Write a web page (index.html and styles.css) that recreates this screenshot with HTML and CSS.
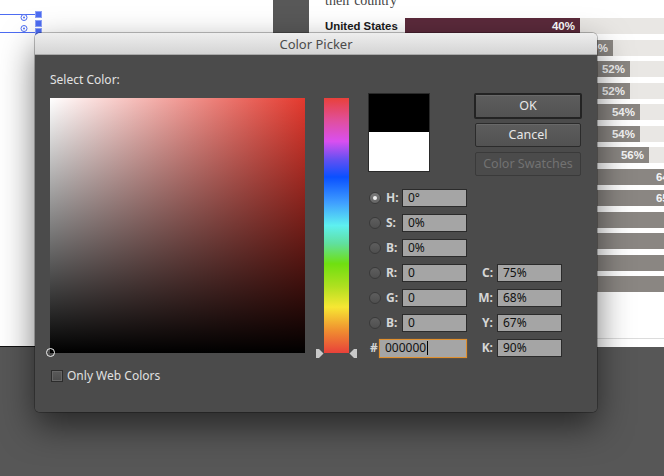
FILE: index.html
```html
<!DOCTYPE html>
<html>
<head>
<meta charset="utf-8">
<title>Color Picker</title>
<link rel="stylesheet" href="styles.css">
</head>
<body>
<div class="desk">
  <div class="pages">
    <div class="page-left">
      <svg class="handles" width="46" height="40" viewBox="0 0 46 40">
        <line x1="0" y1="14.5" x2="36" y2="14.5" stroke="#4d6cf2" stroke-width="1"/>
        <line x1="0" y1="32.5" x2="36" y2="32.5" stroke="#4d6cf2" stroke-width="1"/>
        <circle cx="24" cy="17.5" r="3" fill="#fff" stroke="#4d6cf2" stroke-width="1"/>
        <circle cx="24" cy="17.5" r="1" fill="#4d6cf2"/>
        <circle cx="24" cy="28.5" r="3" fill="#fff" stroke="#4d6cf2" stroke-width="1"/>
        <circle cx="24" cy="28.5" r="1" fill="#4d6cf2"/>
        <rect x="35.5" y="11.5" width="6" height="6" fill="#4d6cf2" stroke="#8ea2f7" stroke-width="1"/>
        <rect x="35.5" y="20.5" width="6" height="6" fill="#4d6cf2" stroke="#8ea2f7" stroke-width="1"/>
        <rect x="35.5" y="28.5" width="6" height="6" fill="#4d6cf2" stroke="#8ea2f7" stroke-width="1"/>
      </svg>
    </div>
    <div class="gutter"></div>
    <div class="page-right">
      <div class="caption">their country</div>
      <div class="rows">
        <div class="row"><div class="lbl">United States</div><div class="track"><div class="bar us" style="width:175px">40%</div></div></div>
        <div class="row"><div class="lbl"></div><div class="track"><div class="bar" style="width:208px">49%</div></div></div>
        <div class="row"><div class="lbl"></div><div class="track"><div class="bar" style="width:225px">52%</div></div></div>
        <div class="row"><div class="lbl"></div><div class="track"><div class="bar" style="width:225px">52%</div></div></div>
        <div class="row"><div class="lbl"></div><div class="track"><div class="bar" style="width:235px">54%</div></div></div>
        <div class="row"><div class="lbl"></div><div class="track"><div class="bar" style="width:235px">54%</div></div></div>
        <div class="row"><div class="lbl"></div><div class="track"><div class="bar" style="width:244px">56%</div></div></div>
        <div class="row"><div class="lbl"></div><div class="track"><div class="bar" style="width:279px">64%</div></div></div>
        <div class="row"><div class="lbl"></div><div class="track"><div class="bar" style="width:279px">65%</div></div></div>
        <div class="row"><div class="lbl"></div><div class="track"><div class="bar" style="width:300px"></div></div></div>
        <div class="row"><div class="lbl"></div><div class="track"><div class="bar" style="width:300px"></div></div></div>
        <div class="row"><div class="lbl"></div><div class="track"><div class="bar" style="width:300px"></div></div></div>
        <div class="row"><div class="lbl"></div><div class="track"><div class="bar" style="width:300px"></div></div></div>
      </div>
      <div class="page-foot"></div>
    </div>
  </div>
  <div class="floor"></div>

  <div class="dialog">
    <div class="titlebar">Color Picker</div>
    <div class="dbody">
      <div class="col-left">
        <div class="sel-label">Select Color:</div>
        <div class="field"><span class="marker"></span></div>
        <div class="web"><span class="checkbox"></span><span>Only Web Colors</span></div>
      </div>
      <div class="hue">
        <svg class="tri tri-l" width="8" height="9" viewBox="0 0 8 9"><polygon points="0,0 3,0 7.5,4.5 3,9 0,9" fill="#c9c9c9"/></svg>
        <svg class="tri tri-r" width="8" height="9" viewBox="0 0 8 9"><polygon points="8,0 5,0 0.5,4.5 5,9 8,9" fill="#c9c9c9"/></svg>
      </div>
      <div class="col-right">
        <div class="top">
          <div class="preview"><div class="p-new"></div><div class="p-old"></div></div>
          <div class="buttons">
            <div class="btn btn-default">OK</div>
            <div class="btn">Cancel</div>
            <div class="btn btn-disabled">Color Swatches</div>
          </div>
        </div>
        <div class="fields">
          <div class="rcell"><span class="radio on"></span></div><div class="flbl">H:</div><div class="inp">0°</div>
          <div class="rcell"><span class="radio"></span></div><div class="flbl">S:</div><div class="inp">0%</div>
          <div class="rcell"><span class="radio"></span></div><div class="flbl">B:</div><div class="inp">0%</div>
          <div class="rcell"><span class="radio"></span></div><div class="flbl">R:</div><div class="inp">0</div><div class="clbl">C:</div><div class="inp">75%</div>
          <div class="rcell"><span class="radio"></span></div><div class="flbl">G:</div><div class="inp">0</div><div class="clbl">M:</div><div class="inp">68%</div>
          <div class="rcell"><span class="radio"></span></div><div class="flbl">B:</div><div class="inp">0</div><div class="clbl">Y:</div><div class="inp">67%</div>
          <div class="hexrow"><span class="hash">#</span><div class="inp hex">000000<span class="caret"></span></div></div><div class="clbl">K:</div><div class="inp">90%</div>
        </div>
      </div>
    </div>
  </div>
</div>
</body>
</html>
```
FILE: styles.css
```css
html, body {
  margin: 0;
  padding: 0;
}
body {
  width: 664px;
  height: 476px;
  overflow: hidden;
  background: #575757;
  font-family: "Noto Sans", "DejaVu Sans", sans-serif;
}
.desk {
  position: relative;
  width: 664px;
  height: 476px;
  display: flex;
  flex-direction: column;
}
.pages {
  display: flex;
  height: 347px;
}
.page-left {
  width: 273px;
  height: 346px;
  background: #fff;
  border-bottom: 1px solid #111;
}
.handles {
  display: block;
}
.gutter {
  width: 36px;
  background: #585858;
}
.page-right {
  flex: 1;
  background: #fff;
  display: flex;
  flex-direction: column;
  overflow: hidden;
  padding-left: 16px;
}
.caption {
  font-family: "Liberation Serif", serif;
  font-size: 14px;
  line-height: 16px;
  color: #444;
  margin-top: -7px;
  height: 16px;
  margin-bottom: 9px;
}
.rows {
  display: flex;
  flex-direction: column;
  gap: 5.5px;
}
.row {
  display: flex;
  height: 16px;
}
.lbl {
  width: 80px;
  flex: none;
  font-family: "Liberation Sans", Arial, sans-serif;
  font-weight: bold;
  font-size: 11.4px;
  line-height: 16px;
  color: #1a1a1a;
}
.track {
  flex: 1;
  background: #e9e7e4;
  display: flex;
  overflow: hidden;
}
.bar {
  flex: none;
  height: 16px;
  background: #8a8682;
  color: #f4f4f4;
  font-family: "Liberation Sans", Arial, sans-serif;
  font-weight: bold;
  font-size: 11.5px;
  line-height: 16px;
  text-align: right;
  padding-right: 5px;
  box-sizing: border-box;
}
.bar.us {
  background: #5b2a3b;
  color: #fff;
}
.page-foot {
  margin-top: auto;
  height: 8px;
  border-top: 1px solid #dcdcdc;
  margin-left: -16px;
}
.floor {
  flex: 1;
  background: #575757;
}

/* dialog */
.dialog {
  position: absolute;
  left: 35px;
  top: 33px;
  width: 562px;
  border-radius: 5px;
  box-shadow: 0 14px 34px rgba(0, 0, 0, 0.55), 0 0 0 1px rgba(0, 0, 0, 0.25);
}
.titlebar {
  height: 21px;
  line-height: 22px;
  border-radius: 5px 5px 0 0;
  background: linear-gradient(#eeeeee, #d4d4d4);
  border-bottom: 1px solid #a9a9a9;
  text-align: center;
  font-size: 13px;
  color: #4b4b4b;
}
.dbody {
  height: 357px;
  box-sizing: border-box;
  background: #4b4b4b;
  border-radius: 0 0 5px 5px;
  display: flex;
  align-items: flex-start;
  padding: 18px 0 0 15px;
  color: #dedede;
  font-size: 12px;
}
.col-left {
  width: 255px;
  display: flex;
  flex-direction: column;
}
.sel-label {
  height: 14px;
  line-height: 14px;
  margin-bottom: 11px;
  color: #e2e2e2;
}
.field {
  position: relative;
  width: 255px;
  height: 255px;
  background:
    linear-gradient(to bottom, rgba(0, 0, 0, 0), #000),
    linear-gradient(to right, #ffffff, #e4392e);
}
.marker {
  position: absolute;
  left: -4px;
  bottom: -4px;
  width: 7px;
  height: 7px;
  border: 1px solid #f0f0f0;
  border-radius: 50%;
}
.web {
  margin-top: 16px;
  display: flex;
  align-items: center;
  gap: 4px;
  height: 13px;
  line-height: 13px;
  color: #e0e0e0;
}
.checkbox {
  width: 10px;
  height: 10px;
  margin-left: 1px;
  border: 1px solid #2c2c2c;
  background: linear-gradient(#5a5a5a, #4c4c4c);
  box-shadow: inset 0 0 0 1px #666;
}
.hue {
  position: relative;
  flex: none;
  margin-left: 19px;
  margin-top: 25px;
  width: 25px;
  height: 255px;
  background: linear-gradient(to bottom,
    #e8413a 0%,
    #e04f9e 9%,
    #d94ff0 17%,
    #6550f2 24%,
    #0a50ff 31%,
    #3f9eff 41%,
    #5ef0f0 50%,
    #60e0a0 57%,
    #6fe010 65%,
    #b0e020 74%,
    #f7e733 82%,
    #f09030 91%,
    #e8413a 100%);
}
.tri {
  position: absolute;
  bottom: -5px;
  display: block;
}
.tri-l { left: -8px; }
.tri-r { right: -8px; }
.col-right {
  flex: none;
  margin-left: 19px;
  margin-top: 20px;
  display: flex;
  flex-direction: column;
}
.top {
  display: flex;
  height: 96px;
  align-items: flex-start;
}
.preview {
  width: 62px;
  height: 79px;
  box-sizing: border-box;
  border: 1px solid #2a2a2a;
  display: flex;
  flex-direction: column;
}
.p-new {
  height: 38px;
  background: #000;
}
.p-old {
  flex: 1;
  background: #fff;
}
.buttons {
  margin-left: 45px;
  width: 106px;
  display: flex;
  flex-direction: column;
}
.btn {
  height: 24px;
  box-sizing: border-box;
  border: 1px solid #2b2b2b;
  border-radius: 2px;
  background: linear-gradient(#5d5d5d, #525252);
  box-shadow: inset 0 1px 0 rgba(255, 255, 255, 0.08);
  color: #e8e8e8;
  font-size: 12.5px;
  line-height: 22px;
  text-align: center;
  margin-top: 5px;
}
.btn-default {
  height: 26px;
  margin: 0 -1px;
  border: 2px solid #232323;
  line-height: 22px;
}
.btn.btn-default + .btn {
  margin-top: 4px;
}
.btn-disabled {
  color: #727272;
  background: #4b4b4b;
  border-color: #3a3a3a;
  box-shadow: none;
}
.fields {
  display: grid;
  grid-template-columns: 18px 16px 65px 30px 65px;
  grid-auto-rows: 18px;
  row-gap: 7px;
}
.rcell {
  grid-column: 1;
  display: flex;
  align-items: center;
}
.radio {
  position: relative;
  width: 10px;
  height: 10px;
  margin-left: 1px;
  border-radius: 50%;
  border: 1px solid #3a3a3a;
  background: linear-gradient(#5e5e5e, #4f4f4f);
}
.radio.on {
  background: linear-gradient(#7a7a7a, #666);
}
.radio.on::after {
  content: "";
  position: absolute;
  left: 3px;
  top: 3px;
  width: 4px;
  height: 4px;
  border-radius: 50%;
  background: #f0f0f0;
}
.flbl {
  grid-column: 2;
  font-weight: bold;
  color: #d6d6d6;
  line-height: 18px;
}
.clbl {
  grid-column: 4;
  font-weight: bold;
  color: #d6d6d6;
  line-height: 18px;
  text-align: right;
  padding-right: 4px;
}
.inp {
  box-sizing: border-box;
  height: 18px;
  border: 1px solid #2b2b2b;
  background: #a5a5a5;
  color: #111;
  padding-left: 5px;
  line-height: 16px;
  font-size: 12px;
}
.hexrow {
  grid-column: 1 / 4;
  display: flex;
}
.hash {
  width: 9px;
  padding-left: 2px;
  font-weight: bold;
  color: #d6d6d6;
  line-height: 18px;
}
.hex {
  flex: 1;
  height: 19px;
  border-color: #e0902f;
  box-shadow: 0 0 1px rgba(224, 144, 47, 0.6);
}
.caret {
  display: inline-block;
  width: 1px;
  height: 14px;
  background: #000;
  vertical-align: -3px;
  margin-left: 1px;
}
```
